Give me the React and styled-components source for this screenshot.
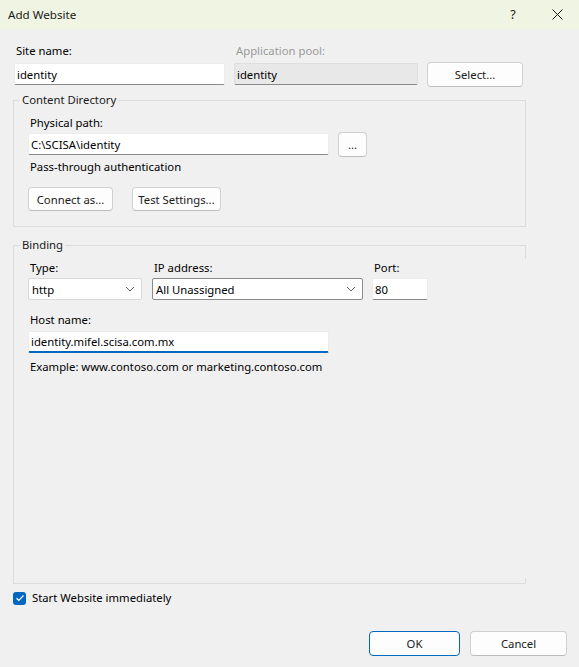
import React from 'react'
import styled, { createGlobalStyle } from 'styled-components'

const GlobalStyle = createGlobalStyle`
  html, body {
    margin: 0;
    padding: 0;
    background: #f0f0f0;
  }
  * {
    box-sizing: border-box;
  }
`

const FONT = `"Noto Sans", "Open Sans", "Liberation Sans", sans-serif`
const SIZE = '11.3px'

const Chevron = () => (
  <svg width="10" height="6" viewBox="0 0 10 6">
    <path d="M1 1 L5 5 L9 1" fill="none" stroke="#606060" strokeWidth="1" />
  </svg>
)

const Check = () => (
  <svg width="10" height="8" viewBox="0 0 10 8">
    <path d="M1.5 4.2 L3.8 6.3 L8.5 1.5" fill="none" stroke="#fff" strokeWidth="1.2" />
  </svg>
)

const App = () => (
  <Window>
    <GlobalStyle />
    <TitleBar>
      <Title>Add Website</Title>
      <TitleButtons>
        <TitleButton>?</TitleButton>
        <TitleButton>
          <svg width="11" height="11" viewBox="0 0 11 11">
            <path d="M0.5 0.5 L10.5 10.5 M10.5 0.5 L0.5 10.5" stroke="#1a1a1a" strokeWidth="1" />
          </svg>
        </TitleButton>
      </TitleButtons>
    </TitleBar>

    <Body>
      <TopRow>
        <Field>
          <Label $gap={5}>Site name:</Label>
          <TextBox $width={211} value="identity" readOnly />
        </Field>
        <Field>
          <Label $gap={5} $disabled>Application pool:</Label>
          <TextBox $width={184} $disabled value="identity" readOnly />
        </Field>
        <SelectButton>Select...</SelectButton>
      </TopRow>

      <Group>
        <Legend>Content Directory</Legend>
        <GroupContent>
          <Label $gap={2}>Physical path:</Label>
          <PathRow>
            <TextBox $width={301} value="C:\SCISA\identity" readOnly />
            <Button $width={29}>...</Button>
          </PathRow>
          <Note $top={2}>Pass-through authentication</Note>
          <ButtonRow>
            <Button $width={85} $height={24}>Connect as...</Button>
            <Button $width={89} $height={24}>Test Settings...</Button>
          </ButtonRow>
        </GroupContent>
      </Group>

      <BindingGroup>
        <Legend>Binding</Legend>
        <BindingContent>
          <BindingRow>
            <Field>
              <Label $gap={3}>Type:</Label>
              <Select $width={114}>
                <span>http</span>
                <Chevron />
              </Select>
            </Field>
            <Field>
              <Label $gap={3}>IP address:</Label>
              <Select $width={211} $dark>
                <span>All Unassigned</span>
                <Chevron />
              </Select>
            </Field>
            <Field>
              <Label $gap={3}>Port:</Label>
              <TextBox $width={56} value="80" readOnly />
            </Field>
          </BindingRow>
          <HostField>
            <Label $gap={4}>Host name:</Label>
            <TextBox $width={301} $focused value="identity.mifel.scisa.com.mx" readOnly />
          </HostField>
          <Note $top={6}>Example: www.contoso.com or marketing.contoso.com</Note>
        </BindingContent>
      </BindingGroup>

      <CheckRow>
        <CheckBox>
          <Check />
        </CheckBox>
        <span>Start Website immediately</span>
      </CheckRow>

      <Footer>
        <Button $width={91} $primary>OK</Button>
        <Button $width={97}>Cancel</Button>
      </Footer>
    </Body>
  </Window>
)

export default App

const Window = styled.div`
  width: 579px;
  height: 667px;
  background: #f0f0f0;
  font-family: ${FONT};
  font-size: ${SIZE};
  color: #000;
  display: flex;
  flex-direction: column;
  overflow: hidden;
`

const TitleBar = styled.div`
  height: 29px;
  flex: none;
  background: #f0f4e3;
  display: flex;
  align-items: center;
  justify-content: space-between;
  padding-left: 8px;
`

const Title = styled.div`
  font-size: 11.6px;
  color: #1a1a1a;
`

const TitleButtons = styled.div`
  display: flex;
  align-items: center;
  height: 100%;
`

const TitleButton = styled.div`
  width: 44px;
  height: 100%;
  display: flex;
  align-items: center;
  justify-content: center;
  font-size: 12.5px;
  color: #1a1a1a;
`

const Body = styled.div`
  flex: 1;
  display: flex;
  flex-direction: column;
  padding: 0 12px 0 13px;
`

const TopRow = styled.div`
  display: grid;
  grid-template-columns: 211px 184px 96px;
  column-gap: 9px;
  align-items: start;
  margin: 15px 0 0 1px;
`

const Field = styled.div`
  display: flex;
  flex-direction: column;
`

const Label = styled.div`
  padding-left: 2px;
  line-height: 14px;
  margin-bottom: ${p => p.$gap}px;
  color: ${p => (p.$disabled ? '#9a9a9a' : '#000')};
  white-space: nowrap;
`

const TextBox = styled.input`
  width: ${p => p.$width}px;
  height: 22px;
  margin: 0;
  padding: 0 2px;
  font-family: ${FONT};
  font-size: ${SIZE};
  color: #000;
  background: ${p => (p.$disabled ? '#e8e8e8' : '#fff')};
  border: 1px solid ${p => (p.$disabled ? '#dedede' : '#ececec')};
  border-bottom: ${p => (p.$focused ? '2px solid #0067c0' : '1px solid #8a8a8a')};
  border-radius: 2px;
  outline: none;
`

const Button = styled.div`
  width: ${p => p.$width}px;
  height: ${p => p.$height || 25}px;
  flex: none;
  display: flex;
  align-items: center;
  justify-content: center;
  background: #fdfdfd;
  border: 1px solid ${p => (p.$primary ? '#0067c0' : '#d0d0d0')};
  border-bottom-color: ${p => (p.$primary ? '#0067c0' : '#bcbcbc')};
  border-radius: 4px;
  color: #1a1a1a;
  white-space: nowrap;
`

const SelectButton = styled(Button)`
  width: 96px;
  margin-top: 18px;
  justify-self: end;
`

const Group = styled.fieldset`
  position: relative;
  margin: 6px 0 0 0;
  padding: 0;
  width: 513px;
  border: 1px solid #dcdcdc;
  border-radius: 0;
`

/* the right edge of this frame only shows near its corners */
const BindingGroup = styled(Group)`
  margin-top: 11px;
  border-right: none;

  &::before,
  &::after {
    content: '';
    position: absolute;
    right: 0;
    width: 1px;
    background: #dcdcdc;
  }
  &::before {
    top: -7px;
    height: 14px;
  }
  &::after {
    bottom: -1px;
    height: 6px;
  }
`

const Legend = styled.legend`
  margin-left: 6px;
  padding: 0 2px;
  line-height: 14px;
  color: #1a1a1a;
`

const GroupContent = styled.div`
  display: flex;
  flex-direction: column;
  align-items: flex-start;
  padding: 9px 0 0 14px;
`

const BindingContent = styled(GroupContent)`
  min-height: 331px;
`

const PathRow = styled.div`
  display: flex;
  align-items: flex-start;
  gap: 9px;

  & > input {
    margin-top: 1px;
  }
`

const Note = styled.div`
  padding-left: 2px;
  margin-top: ${p => p.$top}px;
  line-height: 15px;
`

const ButtonRow = styled.div`
  display: flex;
  gap: 19px;
  margin: 13px 0 15px;
`

const BindingRow = styled.div`
  display: flex;
  gap: 10px;

  & > div:last-child {
    margin-left: -1px;
  }
`

const Select = styled.div`
  width: ${p => p.$width}px;
  height: 22px;
  display: flex;
  align-items: center;
  justify-content: space-between;
  padding: 0 6px 0 3px;
  background: #fff;
  border: 1px solid ${p => (p.$dark ? '#8a8a8a' : '#dadada')};
  border-radius: 2px;
`

const HostField = styled(Field)`
  margin-top: 13px;
`

const CheckRow = styled.div`
  display: flex;
  align-items: center;
  gap: 6px;
  margin-top: 7px;
  line-height: 14px;
`

const CheckBox = styled.div`
  width: 13px;
  height: 13px;
  border-radius: 3px;
  background: #0067c0;
  display: flex;
  align-items: center;
  justify-content: center;
`

const Footer = styled.div`
  display: flex;
  justify-content: flex-end;
  gap: 10px;
  margin-top: 26px;
`
